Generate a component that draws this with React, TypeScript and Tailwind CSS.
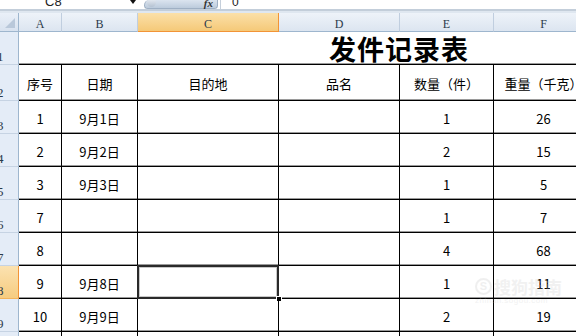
import React from "react";

const cols = ["A", "B", "C", "D", "E", "F"];

const rows = [
  { no: "1", date: "9月1日", qty: "1", weight: "26" },
  { no: "2", date: "9月2日", qty: "2", weight: "15" },
  { no: "3", date: "9月3日", qty: "1", weight: "5" },
  { no: "7", date: "", qty: "1", weight: "7" },
  { no: "8", date: "", qty: "4", weight: "68" },
  { no: "9", date: "9月8日", qty: "1", weight: "11" },
  { no: "10", date: "9月9日", qty: "2", weight: "19" },
  { no: "", date: "", qty: "", weight: "" },
];

const cellFont = "font-['Noto_Sans_CJK_SC',sans-serif] text-[13px] text-black";
const line = "border-r border-b border-black shadow-[inset_0_-1px_0_#9a9a9a]";

function RowHead({ n, active }: { n: number; active?: boolean }) {
  return (
    <div
      className={
        "flex items-end overflow-hidden border-r border-b pb-[1px] font-['Liberation_Serif',serif] text-[13px] leading-none text-[#2b3a4a] " +
        (active
          ? "border-r-[#f29436] border-b-[#f2b45c] bg-gradient-to-b from-[#fbe2b0] to-[#f6cc80]"
          : "border-r-[#9eb6ce] border-b-[#c6d3e3] bg-[#e4ecf7]")
      }
    >
      <span className="-ml-[3px]">{n}</span>
    </div>
  );
}

export default function App() {
  return (
    <div className="relative h-[336px] w-[576px] overflow-hidden bg-white">
      {/* formula bar, cut off at the top */}
      <div className="flex h-[9px] items-start overflow-hidden bg-white">
        <div className="relative h-full w-[130px]">
          <span className="absolute left-[45px] top-[-8px] font-['Liberation_Sans',sans-serif] text-[13px] text-[#222]">C8</span>
        </div>
        <div className="h-0 w-0 border-x-[3px] border-t-[4px] border-x-transparent border-t-[#111]" />
        <div className="ml-[8px] flex h-[9px] w-[74px] items-start rounded-b-[6px] rounded-l-[8px] border border-t-0 border-[#9fb0c4] bg-gradient-to-b from-[#dbe4ef] to-[#bccbdc]">
          <div className="ml-[2px] mt-[-2px] h-[9px] w-[9px] rounded-full bg-gradient-to-b from-[#eef2f7] to-[#b5c2d2]" />
          <span className="ml-auto mr-[4px] mt-[-5px] font-['Liberation_Serif',serif] text-[11px] font-bold italic text-[#333]">fx</span>
        </div>
        <div className="relative ml-[2px] h-full flex-1 border-l border-[#c5cfdb] bg-white">
          <span className="absolute left-[11px] top-[-7px] font-['Liberation_Sans',sans-serif] text-[12px] text-[#222]">0</span>
        </div>
      </div>
      <div className="h-[2px] bg-[#c3ceda]" />
      <div className="h-[2px] bg-[#dfe7f0]" />

      {/* sheet */}
      <div className="grid grid-cols-[19px_43px_76px_141px_121px_94px_100px] grid-rows-[19px_33px_36px_repeat(8,33px)]">
        {/* column headers */}
        <div className="relative border-r border-b border-[#9eb6ce] bg-gradient-to-b from-[#eaf0f8] to-[#d8e2ef]">
          <svg className="absolute bottom-[3px] right-[3px]" width="10" height="10" viewBox="0 0 10 10">
            <path d="M10 0 L10 10 L0 10 Z" fill="#b9c8da" />
          </svg>
        </div>
        {cols.map((c) => (
          <div
            key={c}
            className={
              "flex items-center justify-center border-r border-b pt-[3px] font-['Liberation_Serif',serif] text-[12px] leading-none text-[#2b3a4a] " +
              (c === "C"
                ? "border-[#f29436] bg-gradient-to-b from-[#fbe0a8] to-[#f5c978]"
                : "border-r-[#c0cedf] border-b-[#9eb6ce] bg-gradient-to-b from-[#eef3f9] to-[#dce5f0]")
            }
          >
            {c}
          </div>
        ))}

        {/* row 1: title */}
        <RowHead n={1} />
        <div className="col-span-6 flex items-center border-b border-black pl-[310px] pt-[1px] shadow-[inset_0_-1px_0_#9a9a9a]">
          <span className="font-['Noto_Sans_CJK_SC',sans-serif] text-[27px] font-bold leading-none tracking-[1px] text-black">发件记录表</span>
        </div>

        {/* row 2: headers */}
        <RowHead n={2} />
        {["序号", "日期", "目的地", "品名", "数量（件）", "重量（千克）"].map((h) => (
          <div key={h} className={`flex items-center justify-center overflow-hidden whitespace-nowrap pt-[3px] ${line} ${cellFont}`}>
            {h}
          </div>
        ))}

        {/* data rows */}
        {rows.map((r, i) => {
          const n = i + 3;
          const active = n === 8;
          return (
            <React.Fragment key={n}>
              <RowHead n={n} active={active} />
              <div className={`flex items-center justify-center pt-[3px] ${line} ${cellFont}`}>{r.no}</div>
              <div className={`flex items-center justify-center pt-[3px] ${line} ${cellFont}`}>{r.date}</div>
              <div className={`relative ${line}`}>
                {active && (
                  <>
                    <div className="absolute -left-[1px] -top-[1px] bottom-[-1px] right-[-1px] border-2 border-[#2a2a2a] shadow-[inset_0_0_0_1px_#c8c8c8]" />
                    <div className="absolute bottom-[-4px] right-[-4px] h-[6px] w-[6px] border border-white bg-black" />
                  </>
                )}
              </div>
              <div className={line} />
              <div className={`flex items-center justify-center pt-[3px] ${line} ${cellFont}`}>{r.qty}</div>
              <div className={`flex items-center justify-center pt-[3px] ${line} ${cellFont}`}>{r.weight}</div>
            </React.Fragment>
          );
        })}
      </div>

      {/* watermark */}
      <div className="pointer-events-none absolute left-[475px] top-[278px] flex flex-col items-start opacity-[0.22]">
        <div className="flex items-center gap-[2px]">
          <span className="flex h-[17px] w-[17px] items-center justify-center rounded-full border-2 border-[#bbb] font-['Liberation_Sans',sans-serif] text-[11px] font-bold text-[#bbb]">S</span>
          <span className="font-['Noto_Sans_CJK_SC',sans-serif] text-[17px] font-bold leading-none text-[#c4c4c4]">搜狗指南</span>
        </div>
        <span className="mt-[2px] font-['Liberation_Sans',sans-serif] text-[8px] leading-none tracking-[0.5px] text-[#c4c4c4]">zhinan.sogou.com</span>
      </div>
    </div>
  );
}
